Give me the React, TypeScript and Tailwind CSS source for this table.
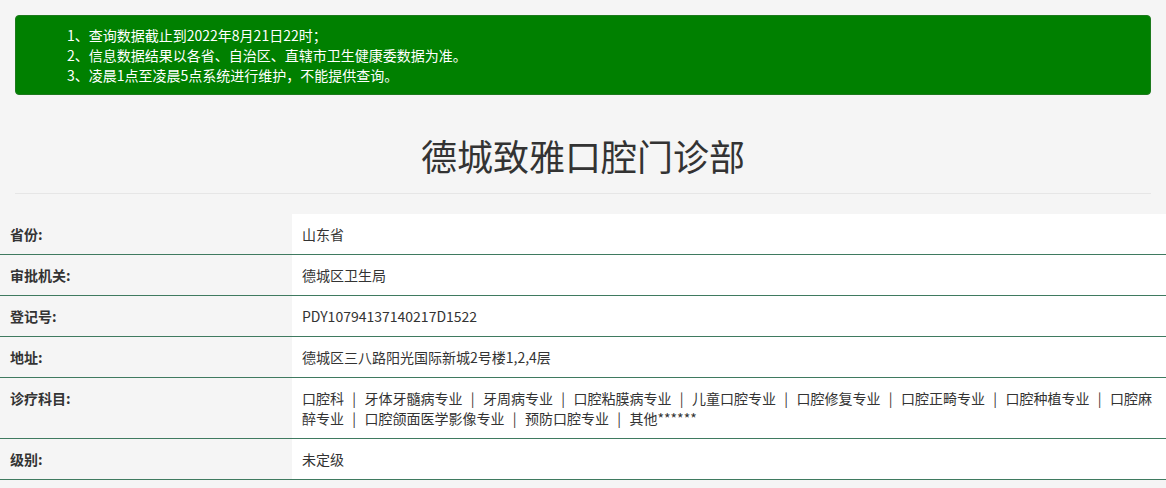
import React from "react";

const NOTICES = [
  "1、查询数据截止到2022年8月21日22时；",
  "2、信息数据结果以各省、自治区、直辖市卫生健康委数据为准。",
  "3、凌晨1点至凌晨5点系统进行维护，不能提供查询。",
];

const SUBJECTS = [
  "口腔科",
  "牙体牙髓病专业",
  "牙周病专业",
  "口腔粘膜病专业",
  "儿童口腔专业",
  "口腔修复专业",
  "口腔正畸专业",
  "口腔种植专业",
  "口腔麻醉专业",
  "口腔颌面医学影像专业",
  "预防口腔专业",
  "其他******",
];

function Subjects() {
  return (
    <>
      {SUBJECTS.map((s, i) => (
        <React.Fragment key={s}>
          {i > 0 && (
            <span className="inline-block w-[20.5px] text-center">|</span>
          )}
          <span>{s}</span>
        </React.Fragment>
      ))}
    </>
  );
}

const ROWS: { label: string; value: React.ReactNode }[] = [
  { label: "省份:", value: "山东省" },
  { label: "审批机关:", value: "德城区卫生局" },
  { label: "登记号:", value: "PDY10794137140217D1522" },
  { label: "地址:", value: "德城区三八路阳光国际新城2号楼1,2,4层" },
  { label: "诊疗科目:", value: <Subjects /> },
  { label: "级别:", value: "未定级" },
];

export default function App() {
  return (
    <div
      className="min-h-screen bg-[#f5f5f5] text-[#333] text-[14px]"
      style={{ fontFamily: '"Noto Sans CJK SC", "Microsoft YaHei", sans-serif' }}
    >
      <div className="px-[15px] pt-[15px]">
        {/* Notice */}
        <div className="h-[80px] rounded-[4px] bg-[#008000] border border-[#1d7a1d] pl-[51px] py-[9px] text-white leading-[20px]">
          {NOTICES.map((n) => (
            <p key={n}>{n}</p>
          ))}
        </div>

        {/* Title */}
        <h1 className="mt-[40px] text-center text-[36px] leading-[40px] font-normal text-[#333]">
          德城致雅口腔门诊部
        </h1>
        <div className="mt-[18px] h-px bg-[#e6e6e6]" />
      </div>

      {/* Detail table */}
      <div className="mt-[20px]">
        {ROWS.map((row) => (
          <div key={row.label} className="flex border-b border-[#3f7a60]">
            <div className="w-[292px] shrink-0 px-[10px] py-[10px] leading-[20px] font-bold bg-[#f5f5f5]">
              {row.label}
            </div>
            <div className="flex-1 px-[10px] py-[10px] leading-[20px] bg-white">
              {row.value}
            </div>
          </div>
        ))}
      </div>
    </div>
  );
}
